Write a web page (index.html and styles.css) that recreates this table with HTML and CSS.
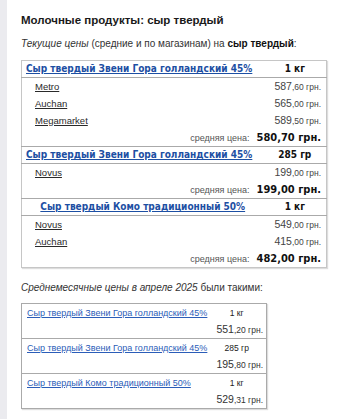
FILE: index.html
```html
<!DOCTYPE html>
<html lang="ru">
<head>
<meta charset="utf-8">
<link rel="stylesheet" href="styles.css">
</head>
<body>
<div class="page">
  <h1 class="title">Молочные продукты: сыр твердый</h1>
  <p class="intro"><i>Текущие цены</i> (средние и по магазинам) на <b>сыр твердый</b>:</p>

  <table class="prices">
    <colgroup><col class="c1"><col class="c2"></colgroup>
    <tbody>
      <tr class="head"><th class="name"><a href="#">Сыр твердый Звени Гора голландский 45%</a></th><th class="unit">1 кг</th></tr>
      <tr><td class="shop"><a href="#">Metro</a></td><td class="price"><span class="fit"><span class="big">587</span>,60 грн.</span></td></tr>
      <tr><td class="shop"><a href="#">Auchan</a></td><td class="price"><span class="fit"><span class="big">565</span>,00 грн.</span></td></tr>
      <tr><td class="shop"><a href="#">Megamarket</a></td><td class="price"><span class="fit"><span class="big">589</span>,50 грн.</span></td></tr>
      <tr><td class="avg-l">средняя цена:</td><td class="avg"><span class="fit">580,70 грн.</span></td></tr>
    </tbody>
    <tbody>
      <tr class="head"><th class="name"><a href="#">Сыр твердый Звени Гора голландский 45%</a></th><th class="unit">285 гр</th></tr>
      <tr><td class="shop"><a href="#">Novus</a></td><td class="price"><span class="fit"><span class="big">199</span>,00 грн.</span></td></tr>
      <tr><td class="avg-l">средняя цена:</td><td class="avg"><span class="fit">199,00 грн.</span></td></tr>
    </tbody>
    <tbody>
      <tr class="head"><th class="name center"><a href="#">Сыр твердый Комо традиционный 50%</a></th><th class="unit">1 кг</th></tr>
      <tr><td class="shop"><a href="#">Novus</a></td><td class="price"><span class="fit"><span class="big">549</span>,00 грн.</span></td></tr>
      <tr><td class="shop"><a href="#">Auchan</a></td><td class="price"><span class="fit"><span class="big">415</span>,00 грн.</span></td></tr>
      <tr><td class="avg-l">средняя цена:</td><td class="avg"><span class="fit">482,00 грн.</span></td></tr>
    </tbody>
  </table>

  <p class="intro month"><i>Среднемесячные цены в апреле 2025</i> были такими:</p>

  <table class="monthly">
    <colgroup><col class="m1"><col class="m2"></colgroup>
    <tbody>
      <tr><td class="mname"><a href="#">Сыр твердый Звени Гора голландский 45%</a></td><td class="munit">1 кг</td></tr>
      <tr class="sep"><td></td><td class="mprice"><span class="fit"><span class="big">551</span>,20 грн.</span></td></tr>
      <tr><td class="mname"><a href="#">Сыр твердый Звени Гора голландский 45%</a></td><td class="munit">285 гр</td></tr>
      <tr class="sep"><td></td><td class="mprice"><span class="fit"><span class="big">195</span>,80 грн.</span></td></tr>
      <tr><td class="mname"><a href="#">Сыр твердый Комо традиционный 50%</a></td><td class="munit">1 кг</td></tr>
      <tr><td></td><td class="mprice"><span class="fit"><span class="big">529</span>,31 грн.</span></td></tr>
    </tbody>
  </table>
</div>
</body>
</html>
```

FILE: styles.css
```css
html, body {
  margin: 0;
  padding: 0;
  background: #fff;
}
body {
  font-family: "Liberation Sans", Arial, sans-serif;
  color: #222;
}
.page {
  border-left: 7px solid #ebebef;
  padding: 12px 0 10px 14px;
  min-height: 397px;
}
.title {
  margin: 0;
  font-size: 11.5px;
  font-weight: bold;
  line-height: 16px;
  color: #1a1a1a;
}
.intro {
  margin: 10px 0 10px;
  font-size: 10px;
  line-height: 12px;
  color: #333;
}
.intro b { color: #111; }
.prices {
  width: 305px;
  table-layout: fixed;
  border-collapse: collapse;
  border: 1px solid #c6c6c6;
  box-shadow: 1px 1px 1px #ddd;
}
.prices .c1 { width: 242px; }
.prices .c2 { width: 63px; }
.prices th, .prices td {
  padding: 0 4px;
  height: 17px;
  line-height: 12px;
  white-space: nowrap;
  overflow: visible;
}
.prices tbody + tbody { border-top: 1px solid #aaa; }
.prices .head th {
  border-bottom: 1px solid #aaa;
  font-family: "DejaVu Sans Condensed", "DejaVu Sans", Verdana, sans-serif;
  font-stretch: condensed;
  font-size: 10px;
  font-weight: bold;
  height: 16px;
}
.prices .name { text-align: left; }
.prices .name.center { text-align: center; }
.prices .name a { color: #1d4fa3; }
.prices .unit { text-align: center; color: #111; }
.shop {
  padding-left: 13px !important;
  font-size: 9.5px;
}
.shop a { color: #2a2a2a; }
.price {
  padding-right: 5px !important;
  font-size: 8.5px;
  color: #444;
}
.big { font-size: 10.5px; }
.fit {
  display: flex;
  justify-content: flex-end;
  align-items: baseline;
  white-space: pre;
}
.avg-l {
  text-align: right;
  padding-right: 14px !important;
  font-size: 9px;
  color: #555;
}
.avg {
  padding-right: 5px !important;
  font-family: "DejaVu Sans Condensed", "DejaVu Sans", Verdana, sans-serif;
  font-stretch: condensed;
  font-size: 11px;
  font-weight: bold;
  color: #111;
}
.month { margin-top: 14px; margin-bottom: 9px; }
.monthly {
  width: 245px;
  table-layout: fixed;
  border-collapse: collapse;
  border: 1px solid #aaa;
  box-shadow: 1px 1px 1px #ddd;
}
.monthly .m1 { width: 186px; }
.monthly .m2 { width: 59px; }
.monthly td {
  height: 17px;
  padding: 0 3px 0 5px;
  line-height: 12px;
  white-space: nowrap;
  vertical-align: middle;
}
.monthly .sep td { border-bottom: 1px solid #aaa; }
.mname { font-size: 9px; }
.mname a { color: #2b5db8; }
.munit { text-align: center; font-size: 8.5px; color: #222; padding: 0 !important; }
.mprice { font-size: 8.5px; color: #333; }
```
